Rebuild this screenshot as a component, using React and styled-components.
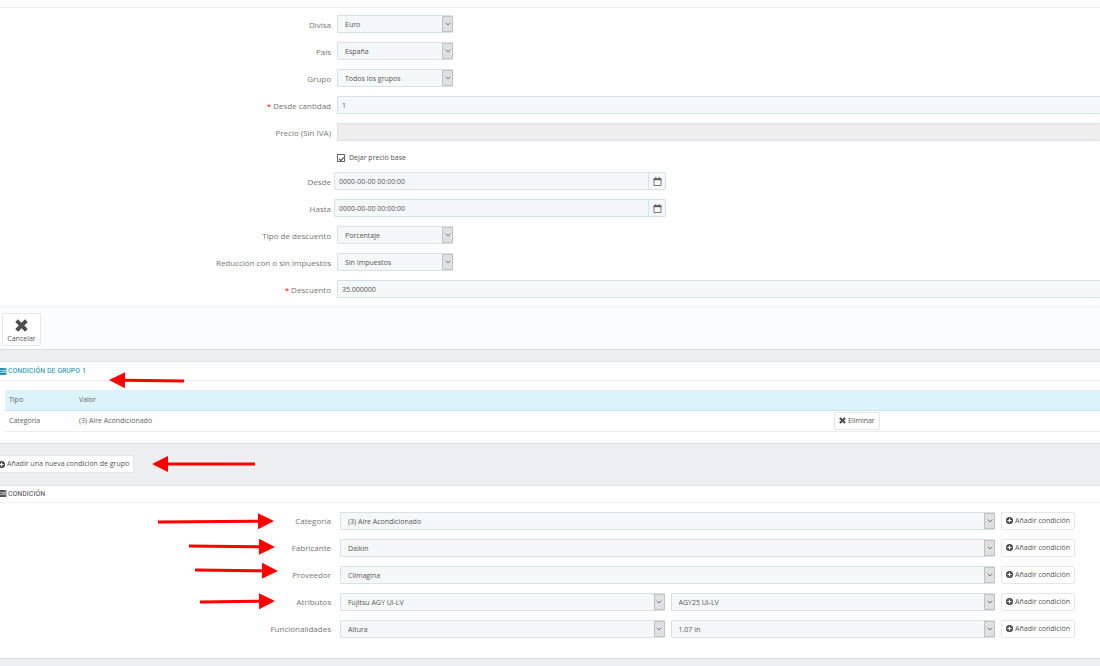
import React, { useId } from "react";
import styled, { createGlobalStyle, css } from "styled-components";

const GlobalStyle = createGlobalStyle`
  *, *::before, *::after { box-sizing: border-box; }
  html, body { margin: 0; background: #eeeff1; overflow-x: hidden; }
  body, button, input, select {
    font-family: "Open Sans", "Noto Sans", sans-serif;
    font-size: 7px;
    line-height: 10px;
    color: #555;
  }
`;

const Page = styled.main`
  position: relative;
  display: flex;
  flex-direction: column;
  min-height: 100vh;
  overflow: hidden;
`;

const Panel = styled.section`
  background: #fefefe;
  border-bottom: 1px solid #d9dde0;
  border-top: ${(p) => (p.$topLine ? "1px solid #dfe4e7" : "0")};
  padding-bottom: ${(p) => p.$bottom || 0}px;
`;

const TopRule = styled.div`
  height: 8px;
  border-bottom: 1px solid #ebebeb;
  margin-bottom: 7px;
`;

const Form = styled.form`
  display: flex;
  flex-direction: column;
  gap: 9px;
  padding-top: ${(p) => p.$top || 0}px;
`;

const Row = styled.div`
  display: grid;
  grid-template-columns: 331fr 769fr;
  align-items: center;
  min-height: ${(p) => (p.$short ? 13 : 18)}px;
`;

const Label = styled.label`
  grid-column: 1;
  text-align: right;
  color: #777;
  padding-top: 1px;
  font-size: 8px;
`;

const Required = styled.span`
  color: #f00;
  margin-right: 2px;
`;

const Cell = styled.div`
  grid-column: 2;
  display: flex;
  align-items: center;
  gap: 6px;
  padding-left: ${(p) => p.$inset || 6}px;
  padding-right: ${(p) => (p.$withAction ? 25 : 0)}px;
`;

const field = css`
  height: 18px;
  margin: 0;
  background: #f4f8f9;
  border: 1px solid #d6e2e5;
  border-radius: 1px;
  outline: none;
`;

const TextInput = styled.input`
  ${field}
  flex: 1;
  min-width: 0;
  padding: 0 4px;
  border-right: 0;
  &:disabled { background: #eee; }
`;

const SelectBox = styled.div`
  ${field}
  display: grid;
  grid-template-columns: 1fr 10px;
  ${(p) => (p.$grow ? "flex: 1; min-width: 0;" : "width: 116px;")}
`;

const NativeSelect = styled.select`
  grid-area: 1 / 1 / 2 / 3;
  appearance: none;
  min-width: 0;
  height: 16px;
  margin: 0;
  border: 0;
  padding: 2px 14px 0 7px;
  background: transparent;
  outline: none;
`;

const SelectArrow = styled.span`
  grid-area: 1 / 2;
  display: grid;
  place-items: center;
  margin-right: -1px;
  background: #e0e0e0;
  border: 1px solid #bfc3c5;
  pointer-events: none;
`;

const DateGroup = styled.div`
  ${field}
  display: flex;
  width: 332px;
`;

const DateInput = styled.input`
  flex: 1;
  min-width: 0;
  border: 0;
  background: transparent;
  padding: 1px 4px 0;
  outline: none;
`;

const DateButton = styled.button`
  display: grid;
  place-items: center;
  width: 17px;
  padding: 0;
  border: 0;
  border-left: 1px solid #d6e2e5;
  background: transparent;
`;

const CheckLabel = styled.label`
  display: flex;
  align-items: center;
  gap: 4px;
  padding-top: 3px;
`;

const Checkbox = styled.input`
  appearance: none;
  display: grid;
  place-items: center;
  width: 8px;
  height: 8px;
  margin: 0;
  border: 1px solid #666;
  background: #fff;
  &:checked::after {
    content: "";
    width: 5px;
    height: 3px;
    border: solid #444;
    border-width: 0 0 1px 1px;
    transform: rotate(-45deg);
  }
`;

const Footer = styled.footer`
  margin-top: 8px;
  padding: 6px 2px 3px;
  background: #fbfcfd;
  border-top: 1px solid #f1f2f3;
`;

const button = css`
  display: flex;
  align-items: center;
  justify-content: center;
  margin: 0;
  background: #fff;
  border: 1px solid #e4e6e7;
  border-radius: 2px;
  white-space: nowrap;
`;

const CancelButton = styled.button`
  ${button}
  flex-direction: column;
  gap: 2px;
  width: 39px;
  height: 33px;
  padding: 4px 0 0;
`;

const SmallButton = styled.button`
  ${button}
  gap: 2px;
  height: 18px;
  padding: 0 4px;
  flex: none;
  width: ${(p) => (p.$wide ? "74px" : "auto")};
`;

const Band = styled.div`
  height: ${(p) => p.$height}px;
  display: flex;
  align-items: center;
`;

const GroupButton = styled(SmallButton)`
  border-left: 0;
  border-radius: 0 2px 2px 0;
  padding: 0 4px 0 0;
  margin-left: -2px;
`;

const Heading = styled.h2`
  display: flex;
  align-items: center;
  gap: 1px;
  height: ${(p) => (p.$tall ? 19 : 17)}px;
  margin: 0;
  border-bottom: 1px solid #eee;
  font: 400 8px/10px "Roboto Condensed", "Roboto", sans-serif;
  font-stretch: condensed;
  text-transform: uppercase;
  color: ${(p) => (p.$accent ? "#2493ae" : "#555")};
`;

const TableWrap = styled.div`
  padding: 9px 0 11px 5px;
`;

const Table = styled.table`
  width: 100%;
  table-layout: fixed;
  border-collapse: collapse;
  th, td { padding: 0 4px; text-align: left; font-weight: 400; }
  th { height: 20px; background: #dbf3f9; border-bottom: 1px solid #c5e9f1; color: #666; }
  td { height: 21px; border-bottom: 1px solid #eaedef; color: #666; }
`;

const ArrowMark = styled.svg`
  position: absolute;
  left: ${(p) => p.$x}px;
  top: ${(p) => p.$y}px;
  overflow: visible;
  pointer-events: none;
`;

function Chevron() {
  return (
    <svg width="6" height="4" viewBox="0 0 6 4" fill="none" stroke="#777" aria-hidden="true">
      <path d="M0.7 0.6 3 3 5.3 0.6" />
    </svg>
  );
}

function CalendarIcon() {
  return (
    <svg width="9" height="9" viewBox="0 0 9 9" aria-hidden="true">
      <path d="M1 2h7v6.5H1z" fill="#fff" stroke="#555" strokeWidth=".8" />
      <path d="M.6 1.4h7.8v1.8H.6z" fill="#555" />
      <path d="M2 .2h1.4v2H2zM5.6.2H7v2H5.6z" fill="#666" />
    </svg>
  );
}

function PlusIcon() {
  return (
    <svg width="7" height="7" viewBox="0 0 14 14" aria-hidden="true">
      <circle cx="7" cy="7" r="7" fill="#444" />
      <path d="M5.8 2.8h2.4v3h3v2.4h-3v3H5.8v-3h-3V5.8h3z" fill="#fff" />
    </svg>
  );
}

function CrossIcon({ size }) {
  return (
    <svg width={size} height={size} viewBox="0 0 12 12" aria-hidden="true">
      <path d="M2.8 2.8 9.2 9.2M9.2 2.8 2.8 9.2" stroke="#4d4d4d" strokeWidth="3.6" strokeLinecap="square" />
    </svg>
  );
}

function ListIcon({ color }) {
  return (
    <svg width="7" height="7" viewBox="0 0 7 7" aria-hidden="true">
      <path d="M0 0h6.5v2H0zM0 2.5h6.5v2H0zM0 5h6.5v2H0z" fill={color} />
      <path d="M4 .7h2v.6H4zM2 3.2h4v.6H2zM5 5.7h1v.6H5z" fill="#fff" fillOpacity=".7" />
    </svg>
  );
}

function Arrow({ from, to }) {
  const dx = to[0] - from[0];
  const dy = to[1] - from[1];
  const length = Math.hypot(dx, dy);
  const angle = (Math.atan2(dy, dx) * 180) / Math.PI;
  return (
    <ArrowMark $x={from[0]} $y={from[1]} width="1" height="1" aria-hidden="true">
      <g transform={`rotate(${angle})`} fill="#f00">
        <path d={`M0 -1.5 H${length - 16} V-8 L${length} 0 L${length - 16} 8 V1.5 H0z`} />
      </g>
    </ArrowMark>
  );
}

function Select({ value, grow, ...native }) {
  return (
    <SelectBox $grow={grow}>
      <NativeSelect defaultValue={value} {...native}>
        <option>{value}</option>
      </NativeSelect>
      <SelectArrow><Chevron /></SelectArrow>
    </SelectBox>
  );
}

function SelectRow({ label, value }) {
  const id = useId();
  return (
    <Row>
      <Label htmlFor={id}>{label}</Label>
      <Cell><Select id={id} value={value} /></Cell>
    </Row>
  );
}

function TextRow({ label, value, required, disabled }) {
  const id = useId();
  return (
    <Row>
      <Label htmlFor={id}>{required && <Required>*</Required>}{label}</Label>
      <Cell><TextInput id={id} type="text" defaultValue={value} disabled={disabled} /></Cell>
    </Row>
  );
}

function DateRow({ label }) {
  const id = useId();
  return (
    <Row>
      <Label htmlFor={id}>{label}</Label>
      <Cell $inset={3}>
        <DateGroup>
          <DateInput id={id} type="text" defaultValue="0000-00-00 00:00:00" />
          <DateButton type="button" aria-label={`Calendario: ${label}`}><CalendarIcon /></DateButton>
        </DateGroup>
      </Cell>
    </Row>
  );
}

function ConditionRow({ label, values }) {
  const id = useId();
  return (
    <Row>
      <Label htmlFor={id}>{label}</Label>
      <Cell $inset={9} $withAction>
        {values.map((v, i) => (
          <Select key={v} grow id={i === 0 ? id : undefined} aria-label={i ? `${label}: valor` : undefined} value={v} />
        ))}
        <SmallButton type="button" $wide><PlusIcon />Añadir condición</SmallButton>
      </Cell>
    </Row>
  );
}

const conditions = [
  ["Categoría", ["(3) Aire Acondicionado"]],
  ["Fabricante", ["Daikin"]],
  ["Proveedor", ["Climagina"]],
  ["Atributos", ["Fujitsu AGY Ui-LV", "AGY25 Ui-LV"]],
  ["Funcionalidades", ["Altura", "1.07 in"]],
];

const arrows = [
  [[184, 381], [109, 380]],
  [[255, 464], [152, 464]],
  [[158, 522], [274, 521]],
  [[189, 546], [275, 547]],
  [[195, 570], [278, 571]],
  [[200, 602], [275, 601]],
];

export default function App() {
  return (
    <Page>
      <GlobalStyle />
      <Panel>
        <TopRule />
        <Form>
          <SelectRow label="Divisa" value="Euro" />
          <SelectRow label="País" value="España" />
          <SelectRow label="Grupo" value="Todos los grupos" />
          <TextRow label="Desde cantidad" value="1" required />
          <TextRow label="Precio (Sin IVA)" value="" disabled />
          <Row $short>
            <Cell>
              <CheckLabel><Checkbox type="checkbox" defaultChecked />Dejar precio base</CheckLabel>
            </Cell>
          </Row>
          <DateRow label="Desde" />
          <DateRow label="Hasta" />
          <SelectRow label="Tipo de descuento" value="Porcentaje" />
          <SelectRow label="Reducción con o sin impuestos" value="Sin Impuestos" />
          <TextRow label="Descuento" value="35.000000" required />
        </Form>
        <Footer>
          <CancelButton type="button"><CrossIcon size={13} />Cancelar</CancelButton>
        </Footer>
      </Panel>

      <Band $height={11} />

      <Panel $topLine>
        <Heading $accent $tall><ListIcon color="#2493ae" />Condición de grupo 1</Heading>
        <TableWrap>
          <Table>
            <colgroup>
              <col style={{ width: "70px" }} />
              <col />
              <col style={{ width: "270px" }} />
            </colgroup>
            <thead>
              <tr><th scope="col">Tipo</th><th scope="col">Valor</th><th aria-label="Acciones" /></tr>
            </thead>
            <tbody>
              <tr>
                <td>Categoría</td>
                <td>(3) Aire Acondicionado</td>
                <td><SmallButton type="button"><CrossIcon size={7} />Eliminar</SmallButton></td>
              </tr>
            </tbody>
          </Table>
        </TableWrap>
      </Panel>

      <Band $height={41}>
        <GroupButton type="button"><PlusIcon />Añadir una nueva condición de grupo</GroupButton>
      </Band>

      <Panel $topLine $bottom={20}>
        <Heading><ListIcon color="#555" />Condición</Heading>
        <Form $top={9}>
          {conditions.map(([label, values]) => (
            <ConditionRow key={label} label={label} values={values} />
          ))}
        </Form>
      </Panel>

      {arrows.map(([from, to]) => (
        <Arrow key={from.join()} from={from} to={to} />
      ))}
    </Page>
  );
}
